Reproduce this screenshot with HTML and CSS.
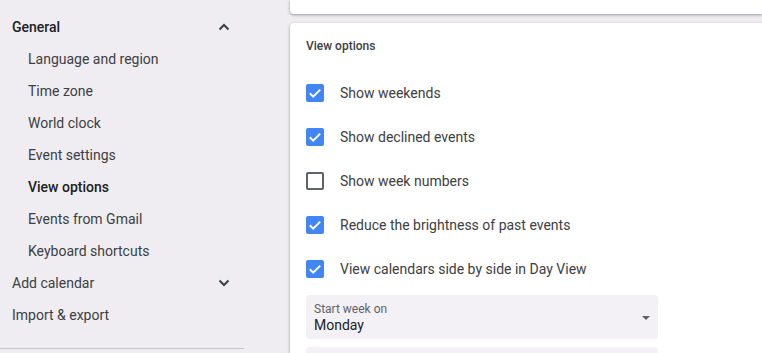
FILE: index.html
```html
<!DOCTYPE html>
<html lang="en">
<head>
<meta charset="utf-8">
<title>Settings - View options</title>
<link rel="stylesheet" href="styles.css">
</head>
<body>
<div class="page">
  <nav class="sidebar">
    <div class="nav-group">
      <div class="nav-row nav-top nav-strong">
        <span>General</span>
        <svg class="chev" width="12" height="8" viewBox="0 0 12 8"><polyline points="1.5,6.5 6,2 10.5,6.5" fill="none" stroke="#3c4043" stroke-width="2"/></svg>
      </div>
      <div class="nav-row nav-sub">Language and region</div>
      <div class="nav-row nav-sub">Time zone</div>
      <div class="nav-row nav-sub">World clock</div>
      <div class="nav-row nav-sub">Event settings</div>
      <div class="nav-row nav-sub nav-strong">View options</div>
      <div class="nav-row nav-sub">Events from Gmail</div>
      <div class="nav-row nav-sub">Keyboard shortcuts</div>
      <div class="nav-row nav-top">
        <span>Add calendar</span>
        <svg class="chev" width="12" height="8" viewBox="0 0 12 8"><polyline points="1.5,1.5 6,6 10.5,1.5" fill="none" stroke="#3c4043" stroke-width="2"/></svg>
      </div>
      <div class="nav-row nav-top">Import &amp; export</div>
    </div>
    <div class="divider"></div>
  </nav>
  <main class="main">
    <div class="card card-prev"></div>
    <section class="card card-view">
      <h2 class="card-title">View options</h2>
      <div class="options">
        <label class="opt"><span class="cb on"><svg width="18" height="18" viewBox="0 0 18 18"><path d="M3.8 9.2 L7.2 12.6 L14.2 5.6" fill="none" stroke="#fff" stroke-width="2"/></svg></span><span class="opt-label">Show weekends</span></label>
        <label class="opt"><span class="cb on"><svg width="18" height="18" viewBox="0 0 18 18"><path d="M3.8 9.2 L7.2 12.6 L14.2 5.6" fill="none" stroke="#fff" stroke-width="2"/></svg></span><span class="opt-label">Show declined events</span></label>
        <label class="opt"><span class="cb off"></span><span class="opt-label">Show week numbers</span></label>
        <label class="opt"><span class="cb on"><svg width="18" height="18" viewBox="0 0 18 18"><path d="M3.8 9.2 L7.2 12.6 L14.2 5.6" fill="none" stroke="#fff" stroke-width="2"/></svg></span><span class="opt-label">Reduce the brightness of past events</span></label>
        <label class="opt"><span class="cb on"><svg width="18" height="18" viewBox="0 0 18 18"><path d="M3.8 9.2 L7.2 12.6 L14.2 5.6" fill="none" stroke="#fff" stroke-width="2"/></svg></span><span class="opt-label">View calendars side by side in Day View</span></label>
      </div>
      <div class="select">
        <div class="select-text">
          <div class="select-label">Start week on</div>
          <div class="select-value">Monday</div>
        </div>
        <span class="caret"></span>
      </div>
      <div class="select select-next"></div>
    </section>
  </main>
</div>
</body>
</html>
```
FILE: styles.css
```css
html, body {
  margin: 0;
  padding: 0;
  height: 100%;
  overflow: hidden;
  background: #efedf1;
  font-family: Roboto, "Liberation Sans", Arial, sans-serif;
  color: #3c4043;
}

.page {
  display: flex;
  height: 100%;
  overflow: hidden;
}

.sidebar {
  width: 290px;
  flex: none;
  padding-top: 11px;
}

.nav-row {
  height: 32px;
  display: flex;
  align-items: center;
  justify-content: space-between;
  font-size: 14px;
  line-height: 20px;
  color: #3c4043;
  padding-right: 60px;
}

.nav-top { padding-left: 12px; }
.nav-sub { padding-left: 28px; }
.nav-strong { font-weight: 500; color: #202124; }

.chev { display: block; }

.divider {
  margin-top: 17px;
  width: 244px;
  height: 1px;
  background: #c6c4c8;
}

.main {
  flex: 1;
  min-width: 0;
  display: flex;
  flex-direction: column;
  gap: 9px;
}

.card {
  background: #fff;
  border-radius: 4px 0 0 4px;
  box-shadow: 0 1px 2px rgba(60,64,67,0.3), 0 1px 3px 1px rgba(60,64,67,0.15);
}

.card-prev {
  flex: none;
  height: 14px;
  border-radius: 0 0 0 4px;
}

.card-view {
  flex: 1;
  min-height: 0;
  overflow: hidden;
  padding: 15px 16px 0;
  border-radius: 4px 0 0 0;
}

.card-title {
  margin: 0 0 17px;
  font-size: 12px;
  line-height: 16px;
  font-weight: 500;
  color: #3c4043;
}

.opt {
  height: 44px;
  display: flex;
  align-items: center;
  gap: 16px;
}

.cb {
  width: 18px;
  height: 18px;
  box-sizing: border-box;
  border-radius: 2px;
  flex: none;
}

.cb svg { display: block; }

.cb.on { background: #4285f4; }

.cb.off { border: 2px solid #5f6368; }

.opt-label {
  font-size: 14px;
  line-height: 20px;
  color: #3c4043;
}

.select {
  margin-top: 4px;
  width: 352px;
  height: 44px;
  box-sizing: border-box;
  background: #f3f1f5;
  border-radius: 4px;
  padding: 7px 8px 5px;
  display: flex;
  align-items: center;
  justify-content: space-between;
}

.select-next { margin-top: 8px; }

.select-label {
  font-size: 12px;
  line-height: 14px;
  color: #5f6368;
}

.select-value {
  font-size: 14px;
  line-height: 18px;
  color: #202124;
}

.caret {
  width: 0;
  height: 0;
  border-left: 4px solid transparent;
  border-right: 4px solid transparent;
  border-top: 4px solid #5f6368;
  margin-right: 0;
}
```
